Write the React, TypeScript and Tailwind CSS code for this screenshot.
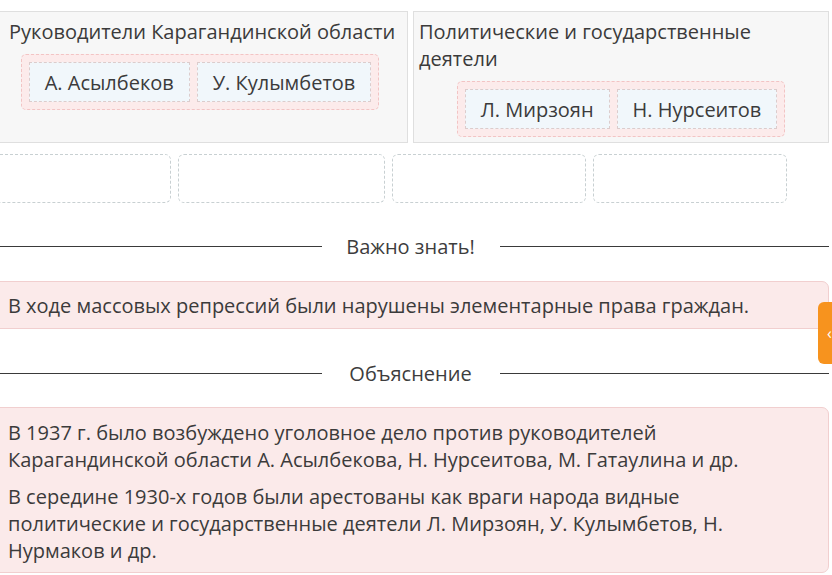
import React from "react";

function Item({ label }: { label: string }) {
  return (
    <div className="h-[40px] flex items-center px-[15px] bg-[#f1f7fb] border border-dashed border-[#dccccc] whitespace-nowrap">
      {label}
    </div>
  );
}

function Divider({ label }: { label: string }) {
  return (
    <div className="flex items-center h-[27px]">
      <div className="flex-1 h-px bg-[#3a3a3a]" />
      <div className="w-[178px] text-center text-[#3d3d3d]">{label}</div>
      <div className="flex-1 h-px bg-[#3a3a3a]" />
    </div>
  );
}

export default function App() {
  return (
    <div
      className="relative w-[832px] h-[575px] overflow-hidden bg-white text-[20px] leading-[27px] text-[#3b3b3b]"
      style={{ fontFamily: '"Open Sans", "Noto Sans", sans-serif' }}
    >
      <div className="ml-[-8px] w-[837px] pt-[11px]">
        <div className="grid grid-cols-2 gap-[5px]">
          <div className="h-[132px] bg-[#f7f7f7] border border-[#dfdfdf] pt-[6px] flex flex-col items-center">
            <div className="self-stretch pl-[16px] whitespace-nowrap">Руководители Карагандинской области</div>
            <div className="mt-[9px] flex gap-[7px] p-[7px] bg-[#fcebeb] border border-dashed border-[#f2c4c4] rounded-[5px]">
              <Item label="А. Асылбеков" />
              <Item label="У. Кулымбетов" />
            </div>
          </div>
          <div className="h-[132px] bg-[#f7f7f7] border border-[#dfdfdf] pt-[6px] flex flex-col items-center">
            <div className="self-stretch pl-[5px] pr-[60px]">Политические и государственные деятели</div>
            <div className="mt-[9px] flex gap-[7px] p-[7px] bg-[#fcebeb] border border-dashed border-[#f2c4c4] rounded-[5px]">
              <Item label="Л. Мирзоян" />
              <Item label="Н. Нурсеитов" />
            </div>
          </div>
        </div>

        <div className="mt-[11px] flex gap-[7px] ml-[-28px]">
          <div className="w-[207px] h-[49px] border border-dashed border-[#c8d0d2] rounded-[6px]" />
          <div className="w-[207px] h-[49px] border border-dashed border-[#c8d0d2] rounded-[6px]" />
          <div className="w-[194px] h-[49px] border border-dashed border-[#c8d0d2] rounded-[6px]" />
          <div className="w-[194px] h-[49px] border border-dashed border-[#c8d0d2] rounded-[6px]" />
        </div>

        <div className="mt-[30px]">
          <Divider label="Важно знать!" />
        </div>

        <div className="mt-[21px] h-[48px] flex items-center px-[15px] bg-[#fbeaea] border border-[#f1cfcf] rounded-[7px] whitespace-nowrap">
          В ходе массовых репрессий были нарушены элементарные права граждан.
        </div>

        <div className="mt-[31px]">
          <Divider label="Объяснение" />
        </div>

        <div className="mt-[20px] h-[166px] pl-[15px] pr-[40px] pt-[11px] bg-[#fbeaea] border border-[#f1cfcf] rounded-[7px] flex flex-col gap-[10px]">
          <p>В 1937 г. было возбуждено уголовное дело против руководителей Карагандинской области А. Асылбекова, Н. Нурсеитова, М. Гатаулина и др.</p>
          <p>В середине 1930-х годов были арестованы как враги народа видные политические и государственные деятели Л. Мирзоян, У. Кулымбетов, Н. Нурмаков и др.</p>
        </div>
      </div>

      <div className="absolute left-[818px] top-[302px] w-[20px] h-[62px] bg-[#f7931e] rounded-l-[6px] flex items-center pl-[9px] text-white text-[16px]">
        ‹
      </div>
    </div>
  );
}
